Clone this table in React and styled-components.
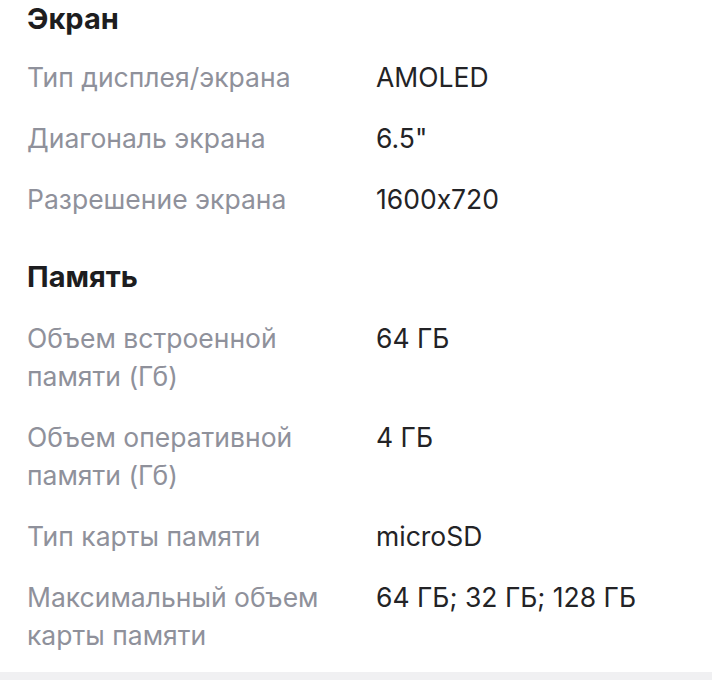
import styled, { createGlobalStyle } from 'styled-components';

const GlobalStyle = createGlobalStyle`
  body {
    margin: 0;
    background: #ffffff;
    font-family: Inter, "Noto Sans", sans-serif;
    font-feature-settings: 'calt' 0;
  }
`;

const Page = styled.div`
  display: flex;
  flex-direction: column;
  width: 712px;
  min-height: 680px;
`;

const Content = styled.div`
  flex: 1;
  padding: 0 27px;
`;

const Section = styled.section`
  display: flex;
  flex-direction: column;
  margin-top: ${({ first }) => (first ? '0' : '40px')};
`;

const Title = styled.h2`
  margin: 0;
  font-size: 29px;
  line-height: 37px;
  font-weight: 700;
  color: #1d1d20;
`;

const SpecList = styled.dl`
  display: grid;
  grid-template-columns: 349px 1fr;
  row-gap: 23px;
  margin: ${({ first }) => (first ? '21px' : '24px')} 0 0;
`;

const Label = styled.dt`
  margin: 0;
  padding-right: 30px;
  font-size: 26.5px;
  line-height: 38px;
  color: #8f919b;
`;

const Value = styled.dd`
  margin: 0;
  font-size: 26.5px;
  line-height: 38px;
  color: #232326;
`;

const Footer = styled.div`
  height: 8px;
  background: #f0f0f2;
`;

const sections = [
  {
    title: 'Экран',
    rows: [
      ['Тип дисплея/экрана', 'AMOLED'],
      ['Диагональ экрана', '6.5"'],
      ['Разрешение экрана', '1600x720'],
    ],
  },
  {
    title: 'Память',
    rows: [
      ['Объем встроенной памяти (Гб)', '64 ГБ'],
      ['Объем оперативной памяти (Гб)', '4 ГБ'],
      ['Тип карты памяти', 'microSD'],
      ['Максимальный объем карты памяти', '64 ГБ; 32 ГБ; 128 ГБ'],
    ],
  },
];

export default function App() {
  return (
    <Page>
      <GlobalStyle />
      <Content>
        {sections.map(({ title, rows }, i) => (
          <Section key={title} first={i === 0}>
            <Title>{title}</Title>
            <SpecList first={i === 0}>
              {rows.map(([label, value]) => (
                <>
                  <Label key={label}>{label}</Label>
                  <Value key={label + '-v'}>{value}</Value>
                </>
              ))}
            </SpecList>
          </Section>
        ))}
      </Content>
      <Footer />
    </Page>
  );
}
